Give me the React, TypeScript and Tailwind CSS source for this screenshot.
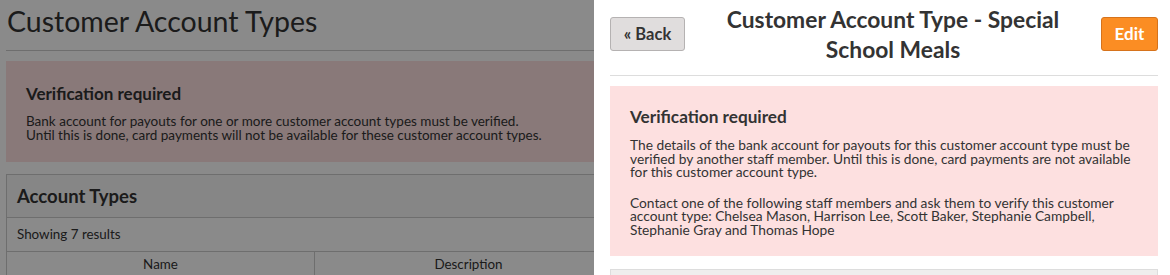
import React from "react";

export default function App() {
  return (
    <div className="relative w-[1170px] h-[275px] overflow-hidden bg-white text-[#333] font-['Lato','Noto_Sans',sans-serif]">
      {/* underlying page */}
      <div className="px-[6px] w-[1170px]">
        <h1 className="text-[28.5px] leading-[40px] font-normal text-[#333] pl-[1px] pt-[1px] pb-[9px] border-b border-[#ccc]">
          Customer Account Types
        </h1>
        <div className="mt-[10px] bg-[#fde0e0] px-[20px] pt-[22px] pb-[20px]">
          <h2 className="text-[17px] leading-[22px] font-bold">Verification required</h2>
          <p className="mt-[9px] text-[13.5px] leading-[14px]">
            Bank account for payouts for one or more customer account types must be verified.
            <br />
            Until this is done, card payments will not be available for these customer account types.
          </p>
        </div>
        <div className="mt-[12px] border border-[#ccc] bg-white">
          <div className="px-[10px] py-[9px] bg-[#f7f7f7] border-b border-[#ccc]">
            <h2 className="text-[18.5px] leading-[24px] font-bold">Account Types</h2>
          </div>
          <div className="px-[10px] py-[9px] text-[13.4px] leading-[15px] border-b border-[#ccc]">Showing 7 results</div>
          <div className="grid grid-cols-[308px_308px_1fr] text-[13.4px] leading-[15px]">
            <div className="text-center pt-[5px] pb-[6px] border-r border-[#ccc]">Name</div>
            <div className="text-center pt-[5px] pb-[6px] border-r border-[#ccc]">Description</div>
            <div />
          </div>
        </div>
      </div>

      {/* overlay */}
      <div className="absolute inset-0 bg-black/[0.46]" />

      {/* side panel */}
      <div className="absolute top-0 bottom-0 right-0 w-[576px] bg-white pl-[16px] pr-[12px]">
        <div className="flex items-center pt-[4px] pb-[11px] border-b border-[#ddd]">
          <button className="flex-none w-[75px] h-[34px] rounded-[3px] border border-[#b5b2b2] bg-[#e0dddd] text-[16.5px] font-bold text-[#333]">
            « Back
          </button>
          <h1 className="flex-1 text-center text-[22.8px] leading-[30px] font-bold text-[#333] px-[20px]">
            Customer Account Type - Special School Meals
          </h1>
          <button className="flex-none w-[57px] h-[34px] rounded-[3px] border border-[#d6731c] bg-[#fb8d23] text-[17px] font-bold text-white">
            Edit
          </button>
        </div>
        <div className="mt-[10px] bg-[#fde0e0] px-[20px] pt-[20px] pb-[20px]">
          <h2 className="text-[17.2px] leading-[22px] font-bold">Verification required</h2>
          <p className="mt-[10px] text-[13.75px] leading-[13.5px]">
            The details of the bank account for payouts for this customer account type must be verified by another staff member. Until this is done, card payments are not available for this customer account type.
          </p>
          <p className="mt-[17px] text-[13.75px] leading-[13.5px]">
            Contact one of the following staff members and ask them to verify this customer account type: Chelsea Mason, Harrison Lee, Scott Baker, Stephanie Campbell, Stephanie Gray and Thomas Hope
          </p>
        </div>
        <div className="mt-[13px] h-[40px] bg-[#efeeed] border border-[#ddd]" />
      </div>
    </div>
  );
}
